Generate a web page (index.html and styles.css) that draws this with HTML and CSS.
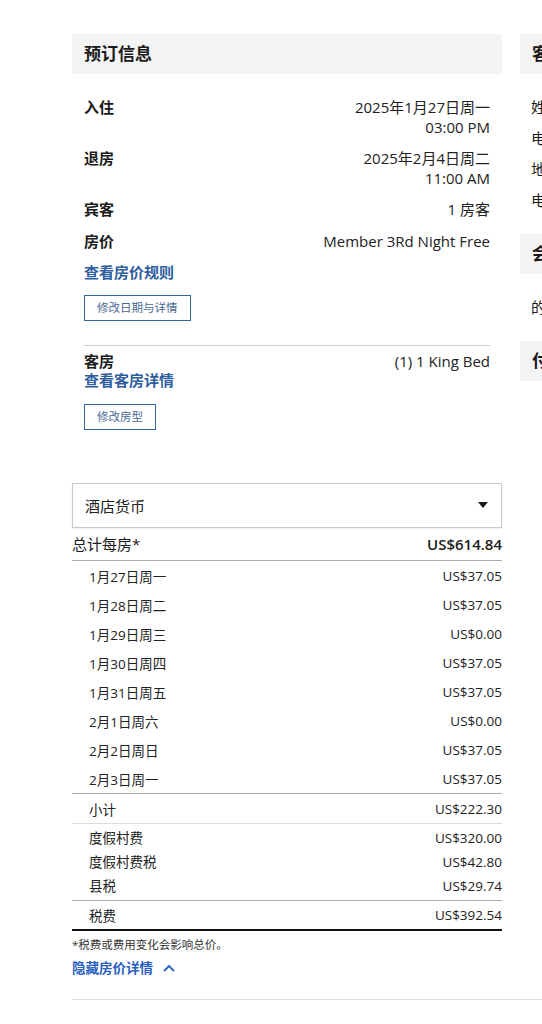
FILE: index.html
```html
<!DOCTYPE html>
<html lang="zh-CN">
<head>
<meta charset="utf-8">
<title>预订信息</title>
<link rel="stylesheet" href="styles.css">
</head>
<body>
<div class="page">
  <div class="columns">
    <main class="col-main">
      <section class="panel">
        <h2 class="panel-title">预订信息</h2>
        <div class="details">
          <div class="row"><span class="label">入住</span><span class="value">2025年1月27日周一<br>03:00 PM</span></div>
          <div class="row"><span class="label">退房</span><span class="value">2025年2月4日周二<br>11:00 AM</span></div>
          <div class="row"><span class="label">宾客</span><span class="value">1 房客</span></div>
          <div class="row"><span class="label">房价</span><span class="value">Member 3Rd Night Free</span></div>
          <a class="link" href="#">查看房价规则</a>
          <button class="btn-outline" type="button">修改日期与详情</button>
          <div class="room">
            <div class="row row-tight"><span class="label">客房</span><span class="value">(1) 1 King Bed</span></div>
            <a class="link" href="#">查看客房详情</a>
            <button class="btn-outline" type="button">修改房型</button>
          </div>
        </div>
      </section>

      <div class="select">
        <span>酒店货币</span>
        <svg class="select-arrow" width="10" height="6" viewBox="0 0 10 6"><polygon points="0,0 10,0 5,6" fill="#1a1a1a"/></svg>
      </div>

      <div class="total-row">
        <span>总计每房*</span>
        <span class="total-amount">US$614.84</span>
      </div>

      <div class="nights">
        <div class="line"><span>1月27日周一</span><span>US$37.05</span></div>
        <div class="line"><span>1月28日周二</span><span>US$37.05</span></div>
        <div class="line"><span>1月29日周三</span><span>US$0.00</span></div>
        <div class="line"><span>1月30日周四</span><span>US$37.05</span></div>
        <div class="line"><span>1月31日周五</span><span>US$37.05</span></div>
        <div class="line"><span>2月1日周六</span><span>US$0.00</span></div>
        <div class="line"><span>2月2日周日</span><span>US$37.05</span></div>
        <div class="line"><span>2月3日周一</span><span>US$37.05</span></div>
      </div>
      <div class="line subtotal"><span>小计</span><span>US$222.30</span></div>
      <div class="fees">
        <div class="fee"><span>度假村费</span><span>US$320.00</span></div>
        <div class="fee"><span>度假村费税</span><span>US$42.80</span></div>
        <div class="fee"><span>县税</span><span>US$29.74</span></div>
      </div>
      <div class="line taxes"><span>税费</span><span>US$392.54</span></div>
      <p class="note">*税费或费用变化会影响总价。</p>
      <a class="toggle" href="#">隐藏房价详情
        <svg width="12" height="8" viewBox="0 0 12 8"><polyline points="1,7 6,2 11,7" fill="none" stroke="#2a5fbf" stroke-width="1.8"/></svg>
      </a>
    </main>

    <aside class="col-side">
      <h2 class="panel-title">客人信息</h2>
      <div class="side-list">
        <div class="side-row">姓名</div>
        <div class="side-row">电话</div>
        <div class="side-row">地址</div>
        <div class="side-row">电子邮件</div>
      </div>
      <h2 class="panel-title">会员信息</h2>
      <div class="side-list">
        <div class="side-row">的会员号码</div>
      </div>
      <h2 class="panel-title">付款信息</h2>
    </aside>
  </div>
  <div class="divider"></div>
</div>
</body>
</html>
```
FILE: styles.css
```css
html, body {
  margin: 0;
  padding: 0;
  overflow-x: hidden;
  background: #ffffff;
}

body {
  font-family: "Open Sans", "Noto Sans CJK SC", sans-serif;
  font-size: 15px;
  color: #1c1c1c;
}

.page {
  width: 900px;
  padding: 34px 0 0 72px;
}

.columns {
  display: flex;
  gap: 18px;
  align-items: flex-start;
}

.col-main {
  width: 430px;
  flex: none;
}

.col-side {
  width: 400px;
  flex: none;
}

.panel-title {
  margin: 0;
  height: 40px;
  line-height: 40px;
  padding-left: 12px;
  background: #f4f4f4;
  font-size: 17px;
  font-weight: 700;
  color: #1a1a1a;
}

.details {
  padding: 24px 12px 0 12px;
}

.row {
  display: flex;
  justify-content: space-between;
  line-height: 19.5px;
  margin-bottom: 12px;
}

.row-tight {
  margin-bottom: 0;
}

.label {
  font-weight: 600;
}

.value {
  text-align: right;
  color: #222;
}

.link {
  display: block;
  line-height: 19.5px;
  font-weight: 700;
  color: #2e5e9e;
  text-decoration: none;
}

.btn-outline {
  display: block;
  margin-top: 12px;
  height: 26px;
  padding: 0 12px;
  border: 1px solid #3566a8;
  background: #ffffff;
  color: #4a6896;
  font-family: "Open Sans", "Noto Sans CJK SC", sans-serif;
  font-size: 11.5px;
  line-height: 24px;
}

.room {
  margin-top: 24px;
  border-top: 1px solid #cfcfcf;
  padding-top: 6px;
}

.room .btn-outline {
  margin-top: 13px;
}

.select {
  margin-top: 53px;
  height: 43px;
  border: 1px solid #c9c9c9;
  box-shadow: 0 1px 2px rgba(0, 0, 0, 0.08);
  display: flex;
  align-items: center;
  justify-content: space-between;
  padding: 0 13px 0 12px;
  font-size: 15px;
  color: #222;
}

.select-arrow {
  display: block;
}

.total-row {
  margin-top: 7px;
  display: flex;
  justify-content: space-between;
  line-height: 19.5px;
  padding-bottom: 6px;
  border-bottom: 1px solid #ababab;
}

.total-amount {
  font-weight: 600;
}

.line {
  display: flex;
  justify-content: space-between;
  align-items: center;
  height: 29px;
  padding-left: 17px;
  font-size: 13.5px;
  color: #222;
}

.subtotal {
  border-top: 1px solid #ababab;
  border-bottom: 1px solid #dcdcdc;
}

.fees {
  padding: 2px 0;
}

.fee {
  display: flex;
  justify-content: space-between;
  line-height: 24px;
  padding-left: 17px;
  font-size: 13.5px;
  color: #222;
}

.taxes {
  height: 28px;
  border-top: 1px solid #ababab;
  border-bottom: 2px solid #111111;
}

.note {
  margin: 6px 0 0 0;
  font-size: 11.5px;
  line-height: 16px;
  color: #333;
}

.toggle {
  margin-top: 6px;
  display: flex;
  align-items: center;
  gap: 10px;
  font-size: 13.5px;
  line-height: 18px;
  font-weight: 700;
  color: #2a5fbf;
  text-decoration: none;
}

.divider {
  margin-top: 22px;
  border-top: 1px solid #dcdcdc;
}

.side-list {
  padding: 18px 0 18px 11px;
}

.side-row {
  line-height: 31px;
  white-space: nowrap;
}
```
